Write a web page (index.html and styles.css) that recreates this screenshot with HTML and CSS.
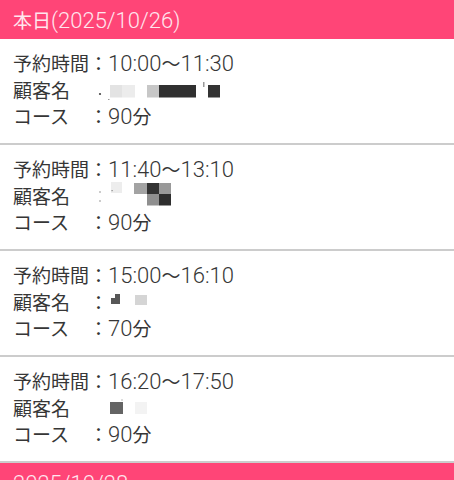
FILE: index.html
```html
<!DOCTYPE html>
<html lang="ja">
<head>
<meta charset="utf-8">
<title>予約一覧</title>
<link rel="stylesheet" href="styles.css">
</head>
<body>
<div class="day">本日<span class="num">(2025/10/26)</span></div>

<div class="item">
  <div class="row"><span class="label">予約時間</span><span class="colon">：</span><span class="num">10:00</span>〜<span class="num">11:30</span></div>
  <div class="row"><span class="label">顧客名</span><svg class="mask" width="140" height="26" viewBox="0 0 140 26"><circle cx="11" cy="17" r="1.1" fill="#444"/><rect x="19" y="22" width="1.5" height="1" fill="#999"/><rect x="21" y="8" width="12" height="12.5" fill="#e3e3e3"/><rect x="33" y="8" width="13" height="12.5" fill="#ececec"/><rect x="58" y="8" width="12" height="12.5" fill="#c7c7c7"/><rect x="70" y="8" width="37" height="12.5" fill="#303030"/><rect x="114" y="5" width="1.5" height="5" fill="#999"/><rect x="119" y="8" width="12" height="12.5" fill="#333"/></svg></div>
  <div class="row"><span class="label">コース</span><span class="colon">：</span><span class="num">90</span>分</div>
</div>

<div class="item">
  <div class="row"><span class="label">予約時間</span><span class="colon">：</span><span class="num">11:40</span>〜<span class="num">13:10</span></div>
  <div class="row"><span class="label">顧客名</span><svg class="mask" width="140" height="26" viewBox="0 0 140 26"><circle cx="11" cy="9" r="1" fill="#bbb"/><circle cx="11" cy="18" r="1" fill="#bbb"/><rect x="22" y="-1" width="11" height="11" fill="#ededed"/><rect x="22.5" y="7" width="1.2" height="1.2" fill="#888"/><rect x="45" y="0" width="13" height="11" fill="#a3a3a3"/><rect x="58" y="0" width="12" height="11" fill="#333"/><rect x="70" y="0" width="12" height="11" fill="#999"/><rect x="58" y="11" width="12" height="11.5" fill="#8f8f8f"/><rect x="70" y="11" width="12" height="11.5" fill="#2e2e2e"/></svg></div>
  <div class="row"><span class="label">コース</span><span class="colon">：</span><span class="num">90</span>分</div>
</div>

<div class="item">
  <div class="row"><span class="label">予約時間</span><span class="colon">：</span><span class="num">15:00</span>〜<span class="num">16:10</span></div>
  <div class="row"><span class="label">顧客名</span><span class="colon">：</span><svg class="mask" width="60" height="26" viewBox="0 0 60 26"><polygon points="3,9 7,9 7,5 12,5 12,15 3,15" fill="#575757"/><rect x="27" y="6" width="12" height="10" fill="#d5d5d5"/></svg></div>
  <div class="row"><span class="label">コース</span><span class="colon">：</span><span class="num">70</span>分</div>
</div>

<div class="item">
  <div class="row"><span class="label">予約時間</span><span class="colon">：</span><span class="num">16:20</span>〜<span class="num">17:50</span></div>
  <div class="row"><span class="label">顧客名</span><svg class="mask" width="70" height="26" viewBox="0 0 70 26"><rect x="32.5" y="4" width="1" height="2" fill="#bbb"/><rect x="21" y="7" width="13" height="12" fill="#646464"/><rect x="46" y="7" width="12" height="12" fill="#f3f3f3"/></svg></div>
  <div class="row"><span class="label">コース</span><span class="colon">：</span><span class="num">90</span>分</div>
</div>

<div class="day"><span class="num">2025/10/28</span></div>
</body>
</html>
```

FILE: styles.css
```css
* {
  box-sizing: border-box;
}

html,
body {
  margin: 0;
  padding: 0;
  background: #ffffff;
}

body {
  width: 454px;
  font-family: "Noto Sans CJK JP", sans-serif;
  font-size: 19px;
  color: #363636;
}

.day {
  height: 39px;
  line-height: 39px;
  padding-left: 13px;
  background: #ff4577;
  color: #ffe6ee;
  white-space: nowrap;
}

.num {
  font-family: Roboto, "Noto Sans CJK JP", sans-serif;
  font-size: 22px;
  font-weight: 300;
}

.item {
  padding: 11px 13px 13.5px;
  border-bottom: 2px solid #cccccc;
}

.row {
  height: 26.5px;
  line-height: 26.5px;
  white-space: nowrap;
}

.label {
  display: inline-block;
  width: 76px;
}

.mask {
  vertical-align: top;
  overflow: visible;
}
```
